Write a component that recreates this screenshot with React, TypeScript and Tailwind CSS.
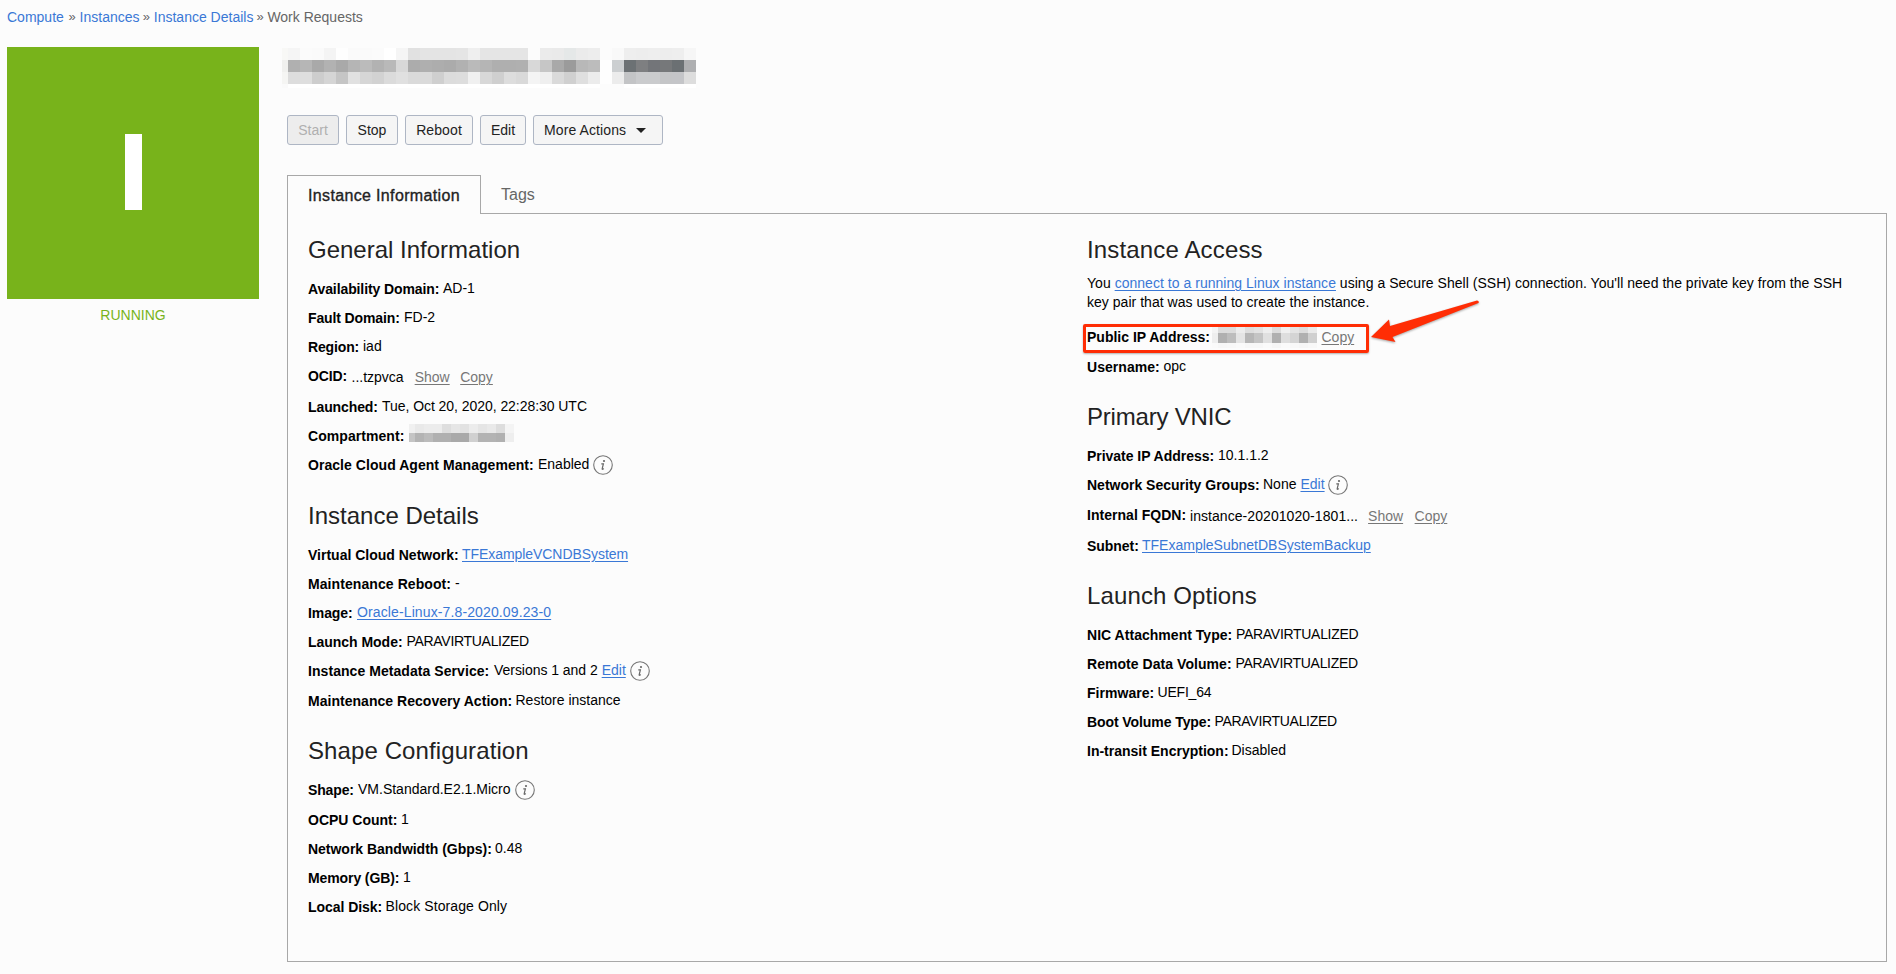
import React from "react";

type Tone = "blue" | "gray";

function Link({ tone = "blue", className = "", children }: { tone?: Tone; className?: string; children: React.ReactNode }) {
  return (
    <a className={`underline decoration-1 underline-offset-2 ${tone === "blue" ? "text-[#3a78d6]" : "text-[#777777]"} ${className}`}>{children}</a>
  );
}

function Info({ className = "" }: { className?: string }) {
  return (
    <svg viewBox="0 0 20 20" className={`mt-[4px] size-5 shrink-0 ${className}`} fill="none">
      <circle cx="10" cy="10" r="9.3" stroke="#767676" strokeWidth="1.1" />
      <circle cx="11" cy="6" r="1.1" fill="#666" />
      <path d="M8.3 8.8h2.1L9.2 13.6q-.2.9.4.7.6-.2 1.1-.8" stroke="#666" strokeWidth="1.2" />
    </svg>
  );
}

function Heading({ className = "", children }: { className?: string; children: React.ReactNode }) {
  return <h2 className={`text-[24px] leading-7 text-[#222] ${className}`}>{children}</h2>;
}

function Row({ label, labelClass, height = "h-[29px]", children }: { label: string; labelClass: string; height?: string; children: React.ReactNode }) {
  return (
    <div className={`flex items-start whitespace-nowrap ${height}`}>
      <span className={`shrink-0 font-bold leading-[29px] ${labelClass}`}>{label}</span>
      {children}
    </div>
  );
}

function Value({ low = false, className = "", children }: { low?: boolean; className?: string; children: React.ReactNode }) {
  return <span className={`flex ${low ? "leading-[31px]" : "leading-[27px]"} ${className}`}>{children}</span>;
}

/* Each line is [height class, cells]; a cell is a gray level (two hex digits) or a full hex colour. */
function Mosaic({ rows, cell, className = "" }: { rows: [string, string][]; cell: string; className?: string }) {
  return (
    <div className={`flex flex-col ${className}`}>
      {rows.map(([height, cells], i) => (
        <div key={i} className={`flex ${height}`}>
          {cells.split(" ").map((v, j) => (
            <span key={j} className={`h-full first:w-[6px] ${cell}`} style={{ backgroundColor: v.length === 2 ? `#${v}${v}${v}` : `#${v}` }} />
          ))}
        </div>
      ))}
    </div>
  );
}

const TITLE: [string, string][] = [
  ["h-3", "f8f8f6 f5 fb fa f4 fe fa fa fb ff f5 e1 e4 e4 e4 e5 ef e5 e5 e5 e5 fc eb ea e5e8e8 eb ed fc f9 ee ed ee ed ee f6"],
  ["h-3", "f0f0ee b0 b6 a9 b2 a9 b5 bb b2 b9 d8 ac af ad ab b1 ba b5 af af b0 d8 c6 a9 9b b8 bc fe cccfd1 6c7174 7e7f81 737579 76787a 6b7073 aeafb1"],
  ["h-3", "f5f5f3 dd de cd d5 c5 e1 d6 d2 db e0 da da cf dc dd f0 d8 cf dd d9 f4 ef da d0 df ec fe ec c3c4c6 cacbcd cacbcd c4c5c7 c4c5c8 dd"],
  ["h-1", "fa ff ff ff ff ff ff ff ff ff ff ff ff ff ff ff ff ff ff ff ff ff ff ff ff ff ff fc fc ff ff ff ff ff ff"],
];

const COMPARTMENT: [string, string][] = [
  ["h-[9px]", "f0 e9 ec ec de e6 e2 ec e5 e9 dd f4"],
  ["h-[9px]", "c4 b3 bb b0 b0 a9 a9 d0 b3 b3 b0 ee"],
];

const ADDRESS: [string, string][] = [
  ["h-[6px]", "f4 dc dc ec dd e2 ee dc f0 e4 dc ea"],
  ["h-[10px]", "ee b0 bd e4 b6 c4 e0 b0 de d4 b0 d0"],
  ["h-[5px]", "fa f7 f8 fa f7 f7 fa f6 fa f8 f6 f8"],
];

const BTN = "flex h-[30px] items-center rounded-[3px] border border-[#aeb6c4] bg-[#f5f5f5] text-[#222]";

export default function App() {
  return (
    <div className="h-[974px] w-[1896px] overflow-hidden bg-[#fcfcfc] font-['Liberation_Sans',Arial,sans-serif] text-[14px] text-black">
      <nav className="flex h-[47px] pl-[7px] pt-[7px] leading-5 text-[#666]">
        <a className="w-[58.6px] text-[#3a78d6]">Compute</a>
        <span className="w-[14px] pl-[3px] text-[13px]">»</span>
        <a className="w-[60.2px] text-[#3a78d6]">Instances</a>
        <span className="w-[14px] pl-[3px] text-[13px]">»</span>
        <a className="w-[99.6px] text-[#3a78d6]">Instance Details</a>
        <span className="w-[14px] pl-[3px] text-[13px]">»</span>
        <span>Work Requests</span>
      </nav>
      <div className="flex">
        <aside className="ml-[7px] w-[252px] shrink-0 text-center">
          <div className="flex h-[252px] justify-center bg-[#78b31b] pt-[87px]">
            <span className="h-[76px] w-[17px] bg-white" />
          </div>
          <div className="mt-[6px] leading-5 text-[#78b31b]">RUNNING</div>
        </aside>
        <main className="w-[1609px] pl-[28px]">
          <Mosaic rows={TITLE} cell="w-3" className="-ml-[5px] mt-px h-[68px]" />
          <div className="-mt-px flex gap-[7px]">
            <button className={`${BTN} w-[52px] justify-center !bg-[#ededed] !text-[#b0b0b0]`}>Start</button>
            <button className={`${BTN} w-[52px] justify-center`}>Stop</button>
            <button className={`${BTN} w-[68px] justify-center tracking-[0.1px]`}>Reboot</button>
            <button className={`${BTN} w-[46px] justify-center`}>Edit</button>
            <button className={`${BTN} w-[130px] pl-[10px]`}>
              <span className="tracking-[0.1px]">More Actions</span>
              <svg viewBox="0 0 10 5" className="ml-[10px] h-[5px] w-[10px]"><path d="M0 0h10L5 5z" fill="#222" /></svg>
            </button>
          </div>
          <div className="mt-[30px] flex h-[39px]">
            <div className="z-10 w-[194px] whitespace-nowrap border border-b-0 border-[#a8a8a8] bg-[#fcfcfc] pl-[20px] text-[16px] leading-[39px] tracking-[0.35px] text-[#222] [-webkit-text-stroke:0.35px_#222]">Instance Information</div>
            <div className="pl-[20px] text-[16px] leading-[40px] text-[#666]">Tags</div>
          </div>
          <section className="-mt-px flex h-[749px] w-[1600px] border border-[#a8a8a8] pl-[20px]">
            <div className="w-[779px] pt-[22px]">
              <Heading>General Information</Heading>
              <div className="mt-[11px]">
                <Row label="Availability Domain:" labelClass="w-[135px] tracking-[-0.1px]"><Value>AD-1</Value></Row>
                <Row label="Fault Domain:" labelClass="w-[96px] tracking-[-0.12px]"><Value>FD-2</Value></Row>
                <Row label="Region:" labelClass="w-[55px] tracking-[-0.15px]"><Value>iad</Value></Row>
                <Row label="OCID:" labelClass="w-[43.5px] tracking-[-0.15px]" height="h-[31px]">
                  <Value low>...tzpvca<Link tone="gray" className="ml-[11px]">Show</Link><Link tone="gray" className="ml-[10.5px]">Copy</Link></Value>
                </Row>
                <Row label="Launched:" labelClass="w-[74px] tracking-[-0.1px]"><Value className="tracking-[-0.05px]">Tue, Oct 20, 2020, 22:28:30 UTC</Value></Row>
                <Row label="Compartment:" labelClass="w-[101px] tracking-[0.06px]">
                  <Mosaic rows={COMPARTMENT} cell="w-[9px]" className="mt-[2px]" />
                </Row>
                <Row label="Oracle Cloud Agent Management:" labelClass="w-[230px] tracking-[0.05px]"><Value>Enabled</Value><Info className="ml-[4px]" /></Row>
              </div>
              <Heading className="mt-[22px]">Instance Details</Heading>
              <div className="mt-[11px]">
                <Row label="Virtual Cloud Network:" labelClass="w-[154px]"><Value className="tracking-[-0.06px]"><Link>TFExampleVCNDBSystem</Link></Value></Row>
                <Row label="Maintenance Reboot:" labelClass="w-[147px] tracking-[0.08px]"><Value>-</Value></Row>
                <Row label="Image:" labelClass="w-[49px] tracking-[-0.1px]"><Value className="tracking-[0.12px]"><Link>Oracle-Linux-7.8-2020.09.23-0</Link></Value></Row>
                <Row label="Launch Mode:" labelClass="w-[98.5px] tracking-[-0.03px]"><Value className="tracking-[-0.3px]">PARAVIRTUALIZED</Value></Row>
                <Row label="Instance Metadata Service:" labelClass="w-[186px] tracking-[0.06px]" height="h-[30px]"><Value><span className="tracking-[-0.04px]">Versions 1 and 2</span><Link className="ml-[4px]">Edit</Link></Value><Info className="ml-[4.5px]" /></Row>
                <Row label="Maintenance Recovery Action:" labelClass="w-[207.5px] tracking-[0.03px]"><Value>Restore instance</Value></Row>
              </div>
              <Heading className="mt-[21px] tracking-[0.1px]">Shape Configuration</Heading>
              <div className="mt-[11px]">
                <Row label="Shape:" labelClass="w-[50px] tracking-[-0.15px]" height="h-[30px]"><Value>VM.Standard.E2.1.Micro</Value><Info className="ml-[4px]" /></Row>
                <Row label="OCPU Count:" labelClass="w-[93px]"><Value>1</Value></Row>
                <Row label="Network Bandwidth (Gbps):" labelClass="w-[187px] tracking-[-0.02px]"><Value>0.48</Value></Row>
                <Row label="Memory (GB):" labelClass="w-[95px] tracking-[-0.1px]"><Value>1</Value></Row>
                <Row label="Local Disk:" labelClass="w-[77.5px] tracking-[-0.05px]"><Value className="tracking-[0.1px]">Block Storage Only</Value></Row>
              </div>
            </div>
            <div className="w-[780px] pt-[22px]">
              <Heading className="tracking-[0.15px]">Instance Access</Heading>
              <p className="mt-[10px] whitespace-nowrap leading-[19px] tracking-[0.03px]">
                You <Link>connect to a running Linux instance</Link> using a Secure Shell (SSH) connection. You'll need the private key from the SSH<br />
                key pair that was used to create the instance.
              </p>
              <div className="relative mt-[11px]">
                <div className="absolute -left-[4px] top-[1px] h-[29px] w-[286px] rounded-[2px] border-[3px] border-[#ff2d05] shadow-[0_1px_2px_rgba(0,0,0,0.3)]" />
                <svg viewBox="0 0 120 60" className="absolute -top-[31px] left-[280px] h-[60px] w-[120px] overflow-visible drop-shadow-[0_1px_1px_rgba(0,0,0,0.35)]">
                  <path d="M4 45 22 27.5 23 34 110 8.5Q112.500 9 111.500 11L25.500 45 28.500 50Z" fill="#ff2d05" />
                </svg>
                <Row label="Public IP Address:" labelClass="w-[125px]" height="h-[30px]">
                  <Mosaic rows={ADDRESS} cell="w-[9px]" className="mt-[4px]" />
                  <Link tone="gray" className="ml-[4.5px] leading-[29px]">Copy</Link>
                </Row>
                <Row label="Username:" labelClass="w-[76.5px] tracking-[0.05px]"><Value>opc</Value></Row>
              </div>
              <Heading className="mt-[21px] tracking-[-0.2px]">Primary VNIC</Heading>
              <div className="mt-[11px]">
                <Row label="Private IP Address:" labelClass="w-[131px] tracking-[-0.03px]"><Value>10.1.1.2</Value></Row>
                <Row label="Network Security Groups:" labelClass="w-[176px]" height="h-[30px]"><Value>None<Link className="ml-1">Edit</Link></Value><Info className="ml-[3px]" /></Row>
                <Row label="Internal FQDN:" labelClass="w-[103px] tracking-[0.03px]" height="h-[31px]">
                  <Value low><span className="tracking-[0.06px]">instance-20201020-1801...</span><Link tone="gray" className="ml-[10px]">Show</Link><Link tone="gray" className="ml-[11.5px]">Copy</Link></Value>
                </Row>
                <Row label="Subnet:" labelClass="w-[55px] tracking-[-0.05px]"><Value><Link>TFExampleSubnetDBSystemBackup</Link></Value></Row>
              </div>
              <Heading className="mt-[21px] tracking-[0.13px]">Launch Options</Heading>
              <div className="mt-[11px]">
                <Row label="NIC Attachment Type:" labelClass="w-[149px] tracking-[0.03px]"><Value className="tracking-[-0.3px]">PARAVIRTUALIZED</Value></Row>
                <Row label="Remote Data Volume:" labelClass="w-[148.5px] tracking-[0.05px]"><Value className="tracking-[-0.3px]">PARAVIRTUALIZED</Value></Row>
                <Row label="Firmware:" labelClass="w-[70.5px] tracking-[0.03px]"><Value className="tracking-[-0.2px]">UEFI_64</Value></Row>
                <Row label="Boot Volume Type:" labelClass="w-[127.5px] tracking-[-0.08px]"><Value className="tracking-[-0.3px]">PARAVIRTUALIZED</Value></Row>
                <Row label="In-transit Encryption:" labelClass="w-[144.500px]"><Value>Disabled</Value></Row>
              </div>
            </div>
          </section>
        </main>
      </div>
    </div>
  );
}
